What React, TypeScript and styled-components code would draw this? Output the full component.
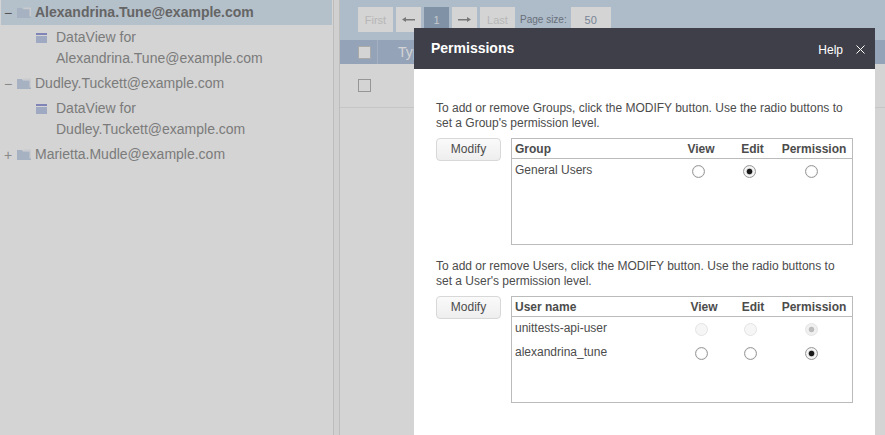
import React from "react";
import styled, { createGlobalStyle } from "styled-components";

const GlobalStyle = createGlobalStyle`
    html, body {
        margin: 0;
        padding: 0;
        width: 885px;
        height: 435px;
        overflow: hidden;
        background: #fff;
        font-family: "Liberation Sans", Arial, sans-serif;
    }
`;

const FolderIcon = () => (
    <svg width="14" height="11" viewBox="0 0 14 11">
        <path d="M0 1 L5 1 L6 2.5 L14 2.5 L14 11 L0 11 Z" fill="#c8d6ea" />
        <path d="M6 0.5 L14 0.5 L14 9.5 L12.5 9.5 L12.5 2 L6.5 2 Z" fill="#f2f4f8" />
    </svg>
);

const ViewIcon = () => (
    <svg width="11" height="10" viewBox="0 0 11 10">
        <rect x="0" y="0" width="11" height="2" fill="#9a9fdc" />
        <rect x="0" y="3" width="11" height="7" fill="#c0cce9" />
    </svg>
);

const ArrowIcon = ({ flip }: { flip?: boolean }) => (
    <svg width="13" height="7" viewBox="0 0 13 7">
        <path d={flip ? "M13 3.5 L9 1 L9 3 L0 3 L0 4.5 L9 4.5 L9 6 Z" : "M0 3.5 L4 1 L4 3 L13 3 L13 4.5 L4 4.5 L4 6 Z"} fill="#909090" />
    </svg>
);

const CloseIcon = () => (
    <svg width="9" height="9" viewBox="0 0 9 9">
        <path d="M0.5 0.5 L8.5 8.5 M8.5 0.5 L0.5 8.5" stroke="#fff" strokeWidth="1" fill="none" />
    </svg>
);

interface PermissionRow {
    name: string;
    level: number;
    disabled?: boolean;
}

interface PermissionTableProps {
    id: string;
    label: string;
    columns: string;
    rows: PermissionRow[];
}

const PermissionTable = ({ id, label, columns, rows }: PermissionTableProps) => (
    <StyledTableBox>
        <StyledTableHead $columns={columns}>
            <StyledHeadLabel>{label}</StyledHeadLabel>
            <StyledHeadCell>View</StyledHeadCell>
            <StyledHeadCell>Edit</StyledHeadCell>
            <StyledHeadCell>Permission</StyledHeadCell>
        </StyledTableHead>
        {rows.map((row) => (
            <StyledTableRow key={row.name} $columns={columns}>
                <StyledRowName>{row.name}</StyledRowName>
                {[0, 1, 2].map((level) => (
                    <StyledRadioCell key={level}>
                        <StyledRadio
                            type="radio"
                            name={`${id}-${row.name}`}
                            checked={row.level === level}
                            disabled={row.disabled}
                            readOnly
                        />
                    </StyledRadioCell>
                ))}
            </StyledTableRow>
        ))}
    </StyledTableBox>
);

export default function App() {
    return (
        <StyledPage>
            <GlobalStyle />
            <StyledSidebar>
                <StyledTreeRow $selected>
                    <StyledToggle $dark>−</StyledToggle>
                    <FolderIcon />
                    <StyledTreeLabel $bold>Alexandrina.Tune@example.com</StyledTreeLabel>
                </StyledTreeRow>
                <StyledChildRow>
                    <StyledChildIcon><ViewIcon /></StyledChildIcon>
                    <StyledChildLabel>DataView for<br />Alexandrina.Tune@example.com</StyledChildLabel>
                </StyledChildRow>
                <StyledTreeRow>
                    <StyledToggle>−</StyledToggle>
                    <FolderIcon />
                    <StyledTreeLabel>Dudley.Tuckett@example.com</StyledTreeLabel>
                </StyledTreeRow>
                <StyledChildRow>
                    <StyledChildIcon><ViewIcon /></StyledChildIcon>
                    <StyledChildLabel>DataView for<br />Dudley.Tuckett@example.com</StyledChildLabel>
                </StyledChildRow>
                <StyledTreeRow>
                    <StyledToggle>+</StyledToggle>
                    <FolderIcon />
                    <StyledTreeLabel>Marietta.Mudle@example.com</StyledTreeLabel>
                </StyledTreeRow>
            </StyledSidebar>
            <StyledSplitter />
            <StyledMain>
                <StyledPager>
                    <StyledPageButton $width={35} $muted>First</StyledPageButton>
                    <StyledPageButton $width={25}><ArrowIcon /></StyledPageButton>
                    <StyledPageButton $width={25} $active>1</StyledPageButton>
                    <StyledPageButton $width={25}><ArrowIcon flip /></StyledPageButton>
                    <StyledPageButton $width={35} $muted>Last</StyledPageButton>
                    <StyledPageSizeLabel>Page size:</StyledPageSizeLabel>
                    <StyledPageSize>50</StyledPageSize>
                </StyledPager>
                <StyledGridHead>
                    <StyledGridCheckCell><StyledHeadCheck /></StyledGridCheckCell>
                    <StyledGridTitle>Type</StyledGridTitle>
                </StyledGridHead>
                <StyledGridRow>
                    <StyledRowCheck />
                </StyledGridRow>
            </StyledMain>
            <StyledBackdrop />
            <StyledModal>
                <StyledModalHeader>
                    <StyledModalTitle>Permissions</StyledModalTitle>
                    <StyledHelp>Help</StyledHelp>
                    <StyledClose><CloseIcon /></StyledClose>
                </StyledModalHeader>
                <StyledModalBody>
                    <StyledIntro>
                        To add or remove Groups, click the MODIFY button. Use the radio buttons to<br />
                        set a Group's permission level.
                    </StyledIntro>
                    <StyledSection>
                        <StyledModify>Modify</StyledModify>
                        <PermissionTable
                            id="group"
                            label="Group"
                            columns="161px 56px 47px 76px"
                            rows={[{ name: "General Users", level: 1 }]}
                        />
                    </StyledSection>
                    <StyledIntro>
                        To add or remove Users, click the MODIFY button. Use the radio buttons to<br />
                        set a User's permission level.
                    </StyledIntro>
                    <StyledSection>
                        <StyledModify>Modify</StyledModify>
                        <PermissionTable
                            id="user"
                            label="User name"
                            columns="166px 52px 46px 76px"
                            rows={[
                                { name: "unittests-api-user", level: 2, disabled: true },
                                { name: "alexandrina_tune", level: 2 },
                            ]}
                        />
                    </StyledSection>
                </StyledModalBody>
            </StyledModal>
        </StyledPage>
    );
}

const StyledPage = styled.div`
    position: relative;
    display: flex;
    width: 885px;
    height: 435px;
    overflow: hidden;
    background: #fff;
`;
const StyledSidebar = styled.div`
    flex: 0 0 333px;
    box-sizing: border-box;
    padding: 0 1px;
    color: #959595;
`;
const StyledTreeRow = styled.div<{ $selected?: boolean }>`
    display: flex;
    align-items: center;
    height: 25px;
    padding-left: 3px;
    background: ${({ $selected }) => ($selected ? "#d9e7f3" : "transparent")};
`;
const StyledToggle = styled.span<{ $dark?: boolean }>`
    width: 13px;
    font-size: 14px;
    color: ${({ $dark }) => ($dark ? "#666" : "#a5a5a5")};
`;
const StyledTreeLabel = styled.span<{ $bold?: boolean }>`
    margin-left: 4px;
    font-size: 14px;
    line-height: 21px;
    font-weight: ${({ $bold }) => ($bold ? 700 : 400)};
    color: ${({ $bold }) => ($bold ? "#7a7a7a" : "#959595")};
`;
const StyledChildRow = styled.div`
    display: flex;
    padding: 2px 0 0 35px;
    height: 44px;
    align-items: flex-start;
`;
const StyledChildIcon = styled.span`
    width: 20px;
    padding-top: 6px;
    line-height: 0;
`;
const StyledChildLabel = styled.span`
    font-size: 14px;
    line-height: 21px;
`;
const StyledSplitter = styled.div`
    flex: 0 0 7px;
    border-left: 1px solid #e4e4e4;
    border-right: 1px solid #e4e4e4;
    box-sizing: border-box;
    background: #fafafa;
`;
const StyledMain = styled.div`
    flex: 1;
    min-width: 0;
`;
const StyledPager = styled.div`
    display: flex;
    align-items: flex-start;
    gap: 3px;
    height: 40px;
    box-sizing: border-box;
    padding: 7px 0 0 18px;
    background: #d2e1f2;
`;
const StyledPageButton = styled.div<{ $width: number; $muted?: boolean; $active?: boolean }>`
    display: flex;
    align-items: center;
    justify-content: center;
    width: ${({ $width }) => $width}px;
    height: 25px;
    font-size: 11px;
    color: ${({ $active, $muted }) => ($active ? "#eef2f6" : $muted ? "#dcdcdc" : "#888")};
    background: ${({ $active }) => ($active ? "#9ab0c8" : "#fff")};
`;
const StyledPageSizeLabel = styled.span`
    margin-left: 2px;
    font-size: 10px;
    line-height: 25px;
    color: #7d8894;
`;
const StyledPageSize = styled.div`
    width: 40px;
    height: 33px;
    margin-left: 1px;
    padding-top: 7px;
    box-sizing: border-box;
    text-align: center;
    font-size: 11px;
    color: #8fa0b4;
    background: #fff;
`;
const StyledGridHead = styled.div`
    display: flex;
    height: 24px;
    background: #b3c4de;
`;
const StyledGridCheckCell = styled.div`
    display: flex;
    align-items: center;
    width: 38px;
    padding-left: 18px;
    box-sizing: border-box;
    border-right: 1px solid #c6d4e8;
`;
const StyledHeadCheck = styled.span`
    width: 13px;
    height: 13px;
    box-sizing: border-box;
    background: #fff;
    border: 1px solid #ccc;
`;
const StyledGridTitle = styled.span`
    padding-left: 20px;
    font-size: 14px;
    line-height: 24px;
    color: #fff;
`;
const StyledGridRow = styled.div`
    height: 44px;
    box-sizing: border-box;
    padding: 15px 0 0 18px;
    border-bottom: 1px solid #eee;
`;
const StyledRowCheck = styled.div`
    width: 13px;
    height: 13px;
    box-sizing: border-box;
    border: 1px solid #b5b5b5;
`;
const StyledBackdrop = styled.div`
    position: absolute;
    inset: 0;
    background: rgba(0, 0, 0, 0.17);
`;
const StyledModal = styled.div`
    position: absolute;
    left: 414px;
    top: 28px;
    width: 461px;
    height: 420px;
    background: #fff;
`;
const StyledModalHeader = styled.div`
    display: flex;
    align-items: center;
    height: 41px;
    padding: 0 10px 0 17px;
    box-sizing: border-box;
    background: #3f3f49;
    color: #fff;
`;
const StyledModalTitle = styled.span`
    flex: 1;
    margin-top: -1px;
    font-size: 14px;
    font-weight: 700;
`;
const StyledHelp = styled.span`
    font-size: 12px;
    margin-top: 2px;
`;
const StyledClose = styled.span`
    margin-left: 13px;
    margin-top: 2px;
    line-height: 0;
`;
const StyledModalBody = styled.div`
    padding: 32px 22px 0;
`;
const StyledIntro = styled.p`
    margin: 0 0 7px;
    font-size: 12px;
    line-height: 15px;
    color: #4c4c4c;
`;
const StyledSection = styled.div`
    display: flex;
    align-items: flex-start;
    gap: 10px;
    margin-bottom: 14px;
`;
const StyledModify = styled.button`
    flex: 0 0 65px;
    height: 23px;
    padding: 0 0 1px;
    box-sizing: border-box;
    border: 1px solid #d8d8d8;
    border-radius: 4px;
    background: linear-gradient(#fafafa, #eeeeee);
    font-family: inherit;
    font-size: 12px;
    color: #4c4c4c;
`;
const StyledTableBox = styled.div`
    flex: 1;
    height: 107px;
    box-sizing: border-box;
    border: 1px solid #bbb;
`;
const StyledTableHead = styled.div<{ $columns: string }>`
    display: grid;
    grid-template-columns: ${({ $columns }) => $columns};
    height: 20px;
    box-sizing: border-box;
    border-bottom: 1px solid #bbb;
    align-items: center;
    font-size: 12px;
    font-weight: 700;
    color: #4c4c4c;
`;
const StyledHeadLabel = styled.span`
    padding-left: 3px;
`;
const StyledHeadCell = styled.span`
    text-align: center;
`;
const StyledTableRow = styled.div<{ $columns: string }>`
    display: grid;
    grid-template-columns: ${({ $columns }) => $columns};
    height: 24px;
    align-items: flex-start;
    font-size: 12px;
    color: #4c4c4c;
`;
const StyledRowName = styled.span`
    padding: 4px 0 0 3px;
`;
const StyledRadioCell = styled.span`
    display: block;
    text-align: center;
    padding-right: 6px;
`;
const StyledRadio = styled.input`
    appearance: none;
    box-sizing: border-box;
    width: 13px;
    height: 13px;
    margin: 6px 0 0;
    border: 1px solid #999;
    border-radius: 50%;
    background: #fff;
    box-shadow: inset 0 0 1px #aaa;

    &:checked {
        background: radial-gradient(circle, #1a1a1a 0 2.4px, #dcdcdc 3.2px, #fff 4.5px);
    }
    &:disabled {
        border-color: #e4e4e4;
        background: #f6f6f6;
        box-shadow: none;
    }
    &:disabled:checked {
        background: radial-gradient(circle, #bcbcbc 0 2.4px, #f0f0f0 3.2px);
    }
`;
